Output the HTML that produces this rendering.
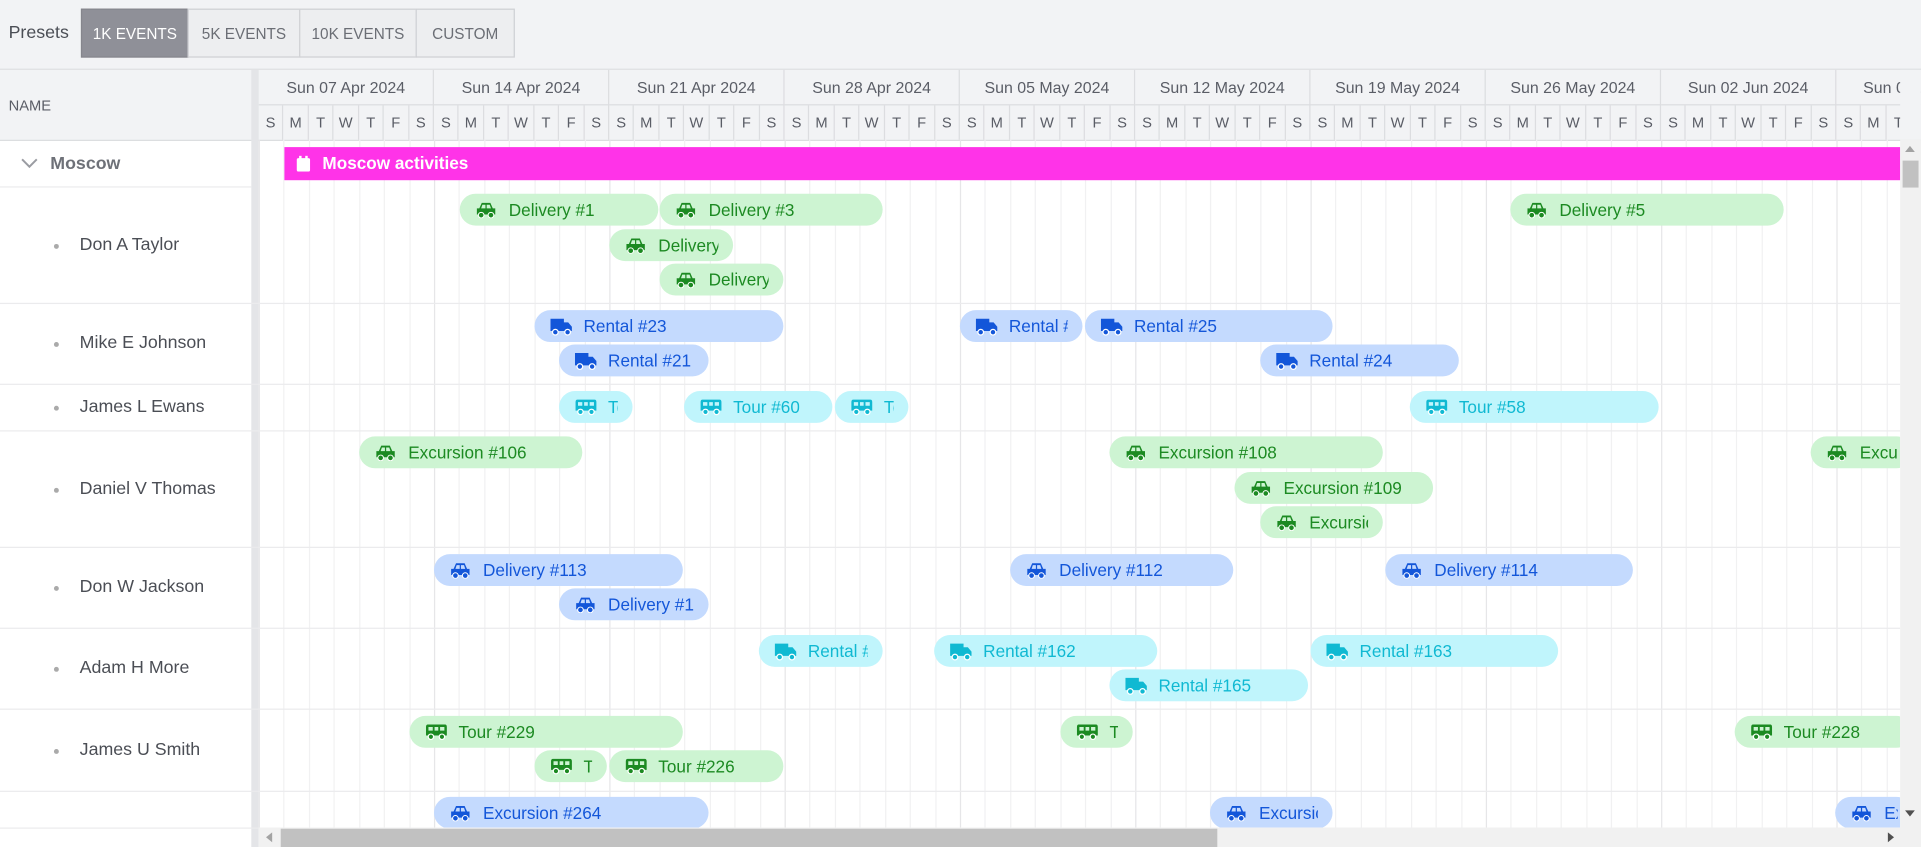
<!DOCTYPE html>
<html><head><meta charset="utf-8">
<style>
html,body{margin:0;padding:0;width:1921px;height:847px;overflow:hidden;background:#fff;font-family:"Liberation Sans",sans-serif;}
#w{position:absolute;left:0;top:0;width:1567px;height:691px;transform:scale(1.2259);transform-origin:0 0;background:#fff;overflow:hidden}
.a{position:absolute}
#tb{left:0;top:0;width:1567px;height:56px;background:#f2f3f5;border-bottom:1px solid #dcdde0}
.btn{position:absolute;top:7px;height:40px;border:1px solid #cfd0d4;background:#edeef0;color:#6b6e75;font-size:12.5px;line-height:40px;text-align:center;box-sizing:border-box}
#hdr{left:0;top:57px;width:1567px;height:57px;background:#f2f3f5;border-bottom:1px solid #dcdde0}
.wk{position:absolute;top:0;height:29px;border-right:1px solid #dcdde0;border-bottom:1px solid #dcdde0;box-sizing:border-box;font-size:13px;color:#5a5d66;text-align:center;line-height:29px}
.dy{position:absolute;top:29px;height:28px;width:20.43px;border-right:1px solid #dcdde0;box-sizing:border-box;font-size:12px;color:#5a5d66;text-align:center;line-height:28px}
.vl{position:absolute;top:114px;height:561px;width:1px;background:#f1f1f2}
.hl{position:absolute;left:0;width:1550px;height:1px;background:#ebebed}
.nm{position:absolute;left:65px;font-size:14.5px;color:#4b4e55}
.dot{position:absolute;left:44px;width:4px;height:4px;border-radius:2px;background:#aaa}
.ev{position:absolute;height:26px;border-radius:13px;overflow:hidden;white-space:nowrap;font-size:14px;line-height:26px;box-sizing:border-box;padding-left:40px}
.ev svg{position:absolute;left:13px;top:6px}
.g{background:#cdf4d2;color:#1c8a22}.b{background:#c4dafe;color:#1356d9}.c{background:#c0f5fc;color:#10b9d2}
</style></head><body>
<div id="w">
<div class="a" id="tb">
<div class="a" style="left:7px;top:19px;font-size:14.5px;color:#4b4e55">Presets</div>
<div class="btn" style="left:66px;width:88px;background:#8f9098;color:#fff;border-color:#85868d">1K EVENTS</div>
<div class="btn" style="left:153px;width:92px">5K EVENTS</div>
<div class="btn" style="left:244px;width:96px">10K EVENTS</div>
<div class="btn" style="left:339px;width:81px">CUSTOM</div>
</div>
<div class="a" id="hdr"><div class="a" style="left:7px;top:22px;font-size:12px;color:#5a5d66">NAME</div></div>
<div class="a" style="left:205px;top:57px;width:6px;height:634px;background:#e4e5e8"></div>
<div id="g"></div>
<div class="a" style="left:0;top:114px;width:205px;height:38px;border-bottom:1px solid #ebebed"></div>
<svg class="a" style="left:17px;top:128px" width="14" height="10"><path d="M1 2 L7 8 L13 2" fill="none" stroke="#9a9ca2" stroke-width="1.6"/></svg>
<div class="a" style="left:41px;top:126px;font-size:14.5px;font-weight:bold;color:#6e7178">Moscow</div>
<div class="a" style="left:232px;top:120px;width:1318px;height:27px;background:#ff33e8;color:#fff;font-weight:bold;font-size:14px;line-height:27px;padding-left:31px;box-sizing:border-box">Moscow activities
<svg class="a" style="left:10px;top:7px" width="11" height="13"><rect x="0" y="2" width="11" height="11" rx="1.5" fill="#fff"/><rect x="2" y="0" width="2" height="3" fill="#fff"/><rect x="7" y="0" width="2" height="3" fill="#fff"/></svg></div>
<div class="a" style="left:1550px;top:114px;width:17px;height:561px;background:#f1f1f1;z-index:5"></div>
<div class="a" style="left:1552px;top:131px;width:13px;height:22px;background:#c1c1c1;z-index:5"></div>
<div class="a" style="left:1554px;top:119px;width:0;height:0;border-left:4px solid transparent;border-right:4px solid transparent;border-bottom:5px solid #a3a3a3;z-index:5"></div>
<div class="a" style="left:1554px;top:661px;width:0;height:0;border-left:4px solid transparent;border-right:4px solid transparent;border-top:5px solid #505050;z-index:5"></div>
<div class="a" style="left:211px;top:675px;width:1356px;height:16px;background:#f1f1f1;z-index:5"></div>
<div class="a" style="left:229px;top:676px;width:764px;height:15px;background:#c1c1c1;z-index:5"></div>
<div class="a" style="left:1540px;top:679px;width:0;height:0;border-top:4px solid transparent;border-bottom:4px solid transparent;border-left:5px solid #505050;z-index:5"></div>
<div class="a" style="left:217px;top:679px;width:0;height:0;border-top:4px solid transparent;border-bottom:4px solid transparent;border-right:5px solid #a3a3a3;z-index:5"></div>
</div>
<script>
var w=document.getElementById('w'),h='';
var weeks=['Sun 07 Apr 2024','Sun 14 Apr 2024','Sun 21 Apr 2024','Sun 28 Apr 2024','Sun 05 May 2024','Sun 12 May 2024','Sun 19 May 2024','Sun 26 May 2024','Sun 02 Jun 2024','Sun 09 Jun 2024'];
var D='SMTWTFS',dw=143/7;
var hh='';
for(var i=0;i<10;i++){var x=211+i*143;hh+='<div class="wk" style="left:'+x+'px;width:143px">'+weeks[i]+'</div>';
for(var j=0;j<7;j++){var dx=x+j*dw;if(dx<1550){hh+='<div class="dy" style="left:'+dx+'px">'+D[j]+'</div>';h+='<div class="vl" style="left:'+dx+'px;'+(j==0?'background:#e6e6e8':'')+'"></div>';}}}
document.getElementById('hdr').innerHTML+=hh+'<div class="a" style="left:1550px;top:0;width:17px;height:57px;background:#f2f3f5"></div>';
var rows=[[152,247,'Don A Taylor'],[247,313,'Mike E Johnson'],[313,351,'James L Ewans'],[351,446,'Daniel V Thomas'],[446,512,'Don W Jackson'],[512,578,'Adam H More'],[578,645,'James U Smith'],[645,675,'']];
rows.forEach(function(r){h+='<div class="hl" style="top:'+r[1]+'px"></div>';if(r[2]){var m=(r[0]+r[1])/2;h+='<div class="dot" style="top:'+(m-1)+'px"></div><div class="nm" style="top:'+(m-8)+'px">'+r[2]+'</div>';}});
var car='<svg width="17" height="14" viewBox="0 0 17 14"><path d="M3 6 L5 1.5 H12 L14 6 H16 V11 H1 V6Z M5.5 3 L4.5 6 H8 V3Z M9 3 V6 H12.5 L11.5 3Z" fill="currentColor" fill-rule="evenodd"/><circle cx="4.5" cy="11.5" r="2.3" fill="currentColor" stroke="#fff" stroke-width="0.8"/><circle cx="12.5" cy="11.5" r="2.3" fill="currentColor" stroke="#fff" stroke-width="0.8"/></svg>';
var truck='<svg width="18" height="15" viewBox="0 0 18 15"><path d="M0 1 H11 V11 H0Z M11 4 H14.5 L17.5 7.5 V11 H11Z" fill="currentColor"/><circle cx="4" cy="12" r="2.3" fill="currentColor" stroke="#fff" stroke-width="1"/><circle cx="14" cy="12" r="2.3" fill="currentColor" stroke="#fff" stroke-width="1"/></svg>';
var bus='<svg width="18" height="14" viewBox="0 0 18 14"><path d="M2 1 H16 Q17.5 1 17.5 3 V10 H0.5 V3 Q0.5 1 2 1Z M2.5 3 V6 H6 V3Z M7.5 3 V6 H10.5 V3Z M12 3 V6 H15.5 V3Z" fill="currentColor" fill-rule="evenodd"/><circle cx="4.5" cy="11" r="2.2" fill="currentColor" stroke="#fff" stroke-width="1"/><circle cx="13.5" cy="11" r="2.2" fill="currentColor" stroke="#fff" stroke-width="1"/></svg>';
var ev=[
['g',car,375,537,158,'Delivery #1'],['g',car,538,720,158,'Delivery #3'],['g',car,1232,1455,158,'Delivery #5'],['g',car,497,598,187,'Delivery #2'],['g',car,538,639,215,'Delivery #4'],
['b',truck,436,639,253,'Rental #23'],['b',truck,456,578,281,'Rental #21'],['b',truck,783,883,253,'Rental #22'],['b',truck,885,1087,253,'Rental #25'],['b',truck,1028,1190,281,'Rental #24'],
['c',bus,456,516,319,'Tour #59'],['c',bus,558,679,319,'Tour #60'],['c',bus,681,741,319,'Tour #61'],['c',bus,1150,1353,319,'Tour #58'],
['g',car,293,475,356,'Excursion #106'],['g',car,905,1128,356,'Excursion #108'],['g',car,1007,1169,385,'Excursion #109'],['g',car,1028,1128,413,'Excursion #107'],['g',car,1477,1560,356,'Excursion #110'],
['b',car,354,557,452,'Delivery #113'],['b',car,824,1006,452,'Delivery #112'],['b',car,1130,1332,452,'Delivery #114'],['b',car,456,578,480,'Delivery #111'],
['c',truck,619,720,518,'Rental #164'],['c',truck,762,944,518,'Rental #162'],['c',truck,1069,1271,518,'Rental #163'],['c',truck,905,1067,546,'Rental #165'],
['g',bus,334,557,584,'Tour #229'],['g',bus,865,924,584,'Tour #227'],['g',bus,1415,1560,584,'Tour #228'],['g',bus,436,495,612,'Tour #225'],['g',bus,497,639,612,'Tour #226'],
['b',car,354,578,650,'Excursion #264'],['b',car,987,1087,650,'Excursion #263'],['b',car,1497,1560,650,'Excursion #265']];
var eh='';
ev.forEach(function(e){eh+='<div class="ev '+e[0]+'" style="left:'+e[2]+'px;width:'+(e[3]-e[2])+'px;top:'+e[4]+'px">'+e[1]+'<span style="display:inline-block;max-width:'+Math.max(0,e[3]-e[2]-52)+'px;overflow:hidden;vertical-align:top">'+e[5]+'</span></div>';});
var g=document.getElementById('g');
g.innerHTML=h+'<div class="a" style="left:211px;top:114px;width:1339px;height:561px;overflow:hidden"><div class="a" style="left:-211px;top:-114px;width:1567px;height:691px">'+eh+'</div></div>';
</script>
</body></html>
